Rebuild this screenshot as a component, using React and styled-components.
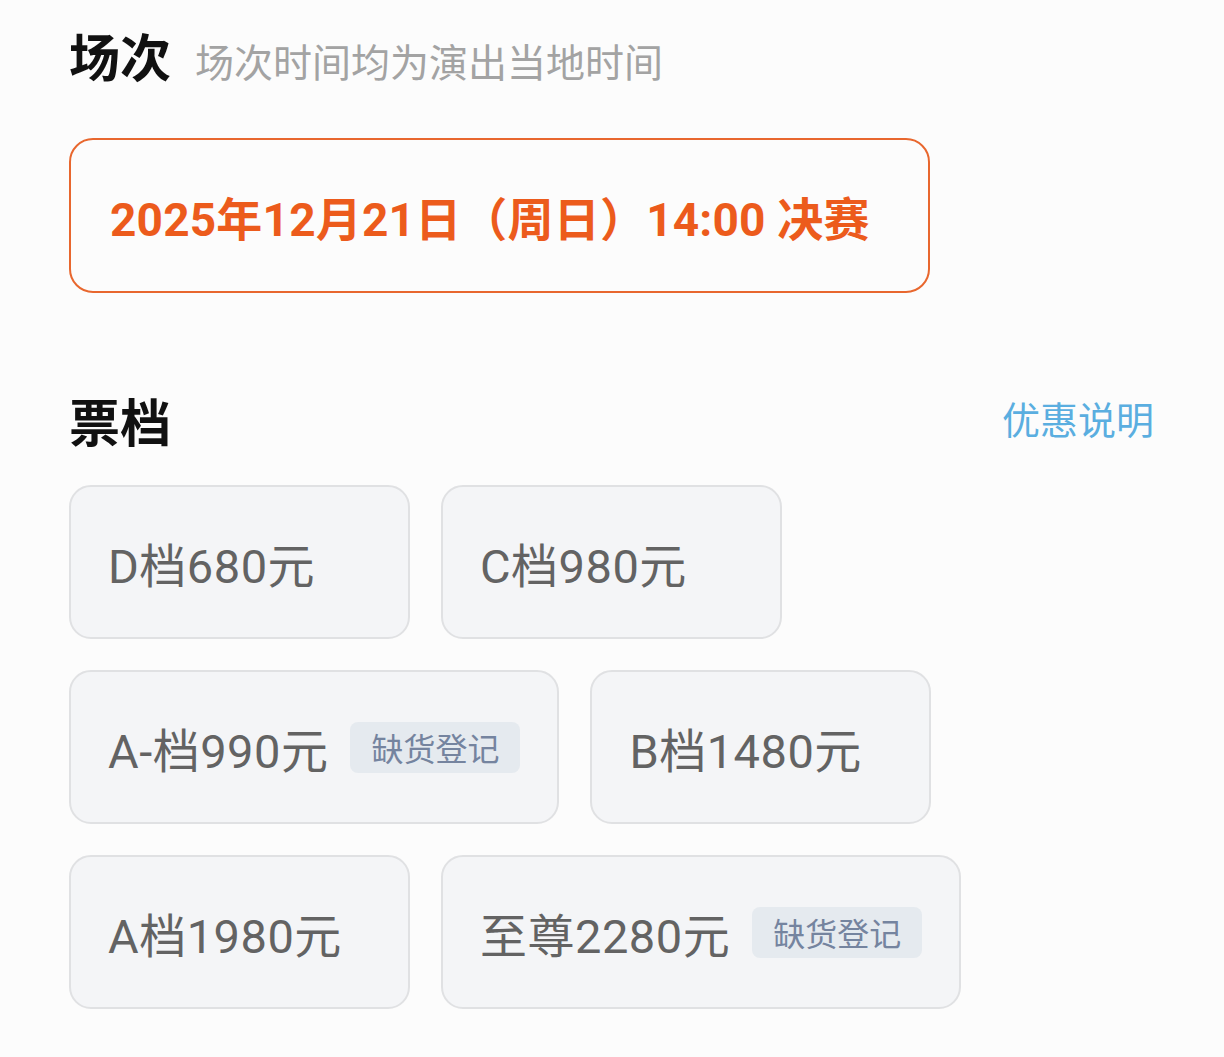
import React from 'react';
import styled, { createGlobalStyle } from 'styled-components';

const GlobalStyle = createGlobalStyle`
    body {
        margin: 0;
        background: #fcfcfc;
        font-family: Roboto, "Noto Sans CJK SC", sans-serif;
    }
`;

const Page = styled.div`
    width: 1085px;
    padding: 24px 0 40px 69px;
`;

const SectionHeader = styled.div`
    display: flex;
    align-items: baseline;
    justify-content: ${({ spread }) => (spread ? 'space-between' : 'flex-start')};
    gap: 24px;
`;

const Title = styled.h2`
    margin: 0;
    font-size: 51px;
    line-height: 72px;
    font-weight: 700;
    color: #111;
`;

const Hint = styled.span`
    font-size: 39px;
    color: #a3a3a3;
`;

const LinkText = styled.a`
    font-size: 38px;
    color: #5aaee0;
    text-decoration: none;
    position: relative;
    top: -8px;
`;

const SessionBox = styled.div`
    box-sizing: border-box;
    width: 861px;
    height: 155px;
    margin-top: 42px;
    display: flex;
    align-items: center;
    padding: 0 39px;
    border: 2px solid #e8672e;
    border-radius: 24px;
    font-size: 46px;
    letter-spacing: 0.2px;
    font-weight: 700;
    color: #ec5b1c;
`;

const TicketSection = styled.div`
    margin-top: 96px;
`;

const CardGrid = styled.div`
    display: flex;
    flex-wrap: wrap;
    gap: 31px;
    margin-top: 24px;
`;

const Card = styled.div`
    box-sizing: border-box;
    min-width: 341px;
    height: 154px;
    display: flex;
    align-items: center;
    gap: 22px;
    padding: 0 37px;
    background: #f4f5f7;
    border: 2px solid #e0e1e3;
    border-radius: 22px;
`;

const Price = styled.span`
    font-size: 47px;
    letter-spacing: 0.5px;
    color: #636363;
`;

const Badge = styled.span`
    display: inline-flex;
    align-items: center;
    height: 51px;
    padding: 0 21px;
    border-radius: 8px;
    background: #e5eaef;
    color: #75849f;
    font-size: 32px;
`;

const tickets = [
    { label: 'D档680元' },
    { label: 'C档980元' },
    { label: 'A-档990元', soldOut: true },
    { label: 'B档1480元' },
    { label: 'A档1980元' },
    { label: '至尊2280元', soldOut: true },
];

const App = () => (
    <>
        <GlobalStyle />
        <Page>
            <SectionHeader>
                <Title>场次</Title>
                <Hint>场次时间均为演出当地时间</Hint>
            </SectionHeader>
            <SessionBox>2025年12月21日（周日）14:00 决赛</SessionBox>

            <TicketSection>
                <SectionHeader spread>
                    <Title>票档</Title>
                    <LinkText href="#">优惠说明</LinkText>
                </SectionHeader>
                <CardGrid>
                    {tickets.map(t => (
                        <Card key={t.label}>
                            <Price>{t.label}</Price>
                            {t.soldOut && <Badge>缺货登记</Badge>}
                        </Card>
                    ))}
                </CardGrid>
            </TicketSection>
        </Page>
    </>
);

export default App;
